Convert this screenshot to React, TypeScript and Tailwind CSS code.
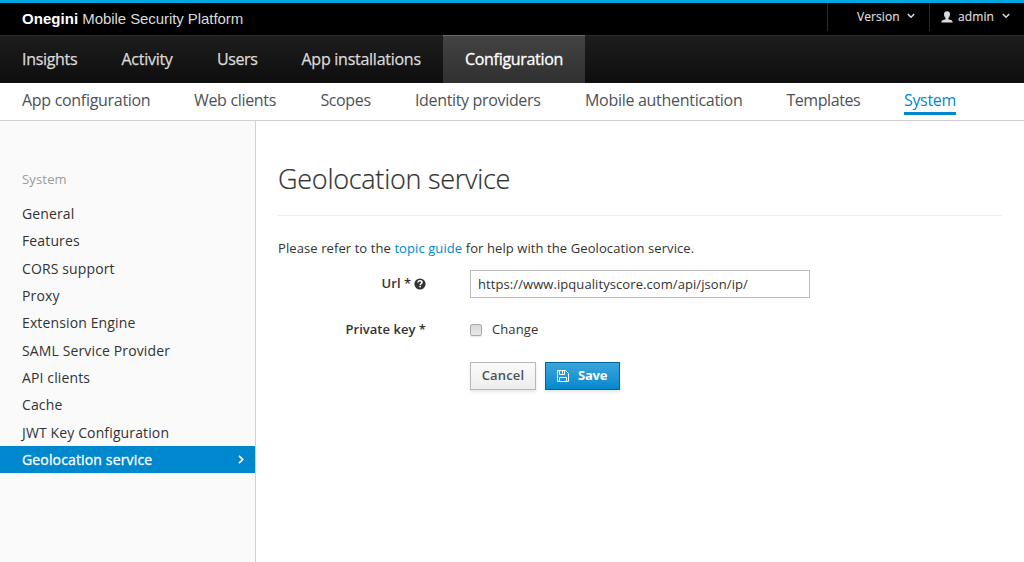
import React from "react";

const topNav = [
  { label: "Insights", active: false, size: "w-[99.5px] tracking-[-0.31px]" },
  { label: "Activity", active: false, size: "w-[95.5px] tracking-[-0.27px]" },
  { label: "Users", active: false, size: "w-[84.5px] tracking-[-0.4px]" },
  { label: "App installations", active: false, size: "w-[163.5px] tracking-[-0.26px]" },
  { label: "Configuration", active: true, size: "w-[142px] tracking-[-0.31px]" },
];

const subNav = [
  { label: "App configuration", size: "w-[172px] tracking-[-0.3px]" },
  { label: "Web clients", size: "w-[126.4px] tracking-[-0.33px]" },
  { label: "Scopes", size: "w-[94.6px] tracking-[-0.36px]" },
  { label: "Identity providers", size: "w-[170px] tracking-[-0.34px]" },
  { label: "Mobile authentication", size: "w-[201.4px] tracking-[-0.29px]" },
  { label: "Templates", size: "w-[117.6px] tracking-[-0.42px]" },
  { label: "System", size: "w-[52px] tracking-[-0.32px]" },
];

const sideNav = [
  "General",
  "Features",
  "CORS support",
  "Proxy",
  "Extension Engine",
  "SAML Service Provider",
  "API clients",
  "Cache",
  "JWT Key Configuration",
];

function Chevron({ className }: { className: string }) {
  return (
    <svg viewBox="0 0 8 6" className={className} fill="none" stroke="currentColor" strokeWidth="1.6">
      <path d="M0.8 1 L4 4.2 L7.2 1" />
    </svg>
  );
}

function UserIcon() {
  return (
    <svg viewBox="0 0 12 12" className="h-3 w-3" fill="currentColor">
      <path d="M6 0.3C4 0.3 3 1.5 3 3.3C3 5 3.8 6.2 4.5 6.9V8.3L0.9 9.6L0.3 11.6H11.7L11.1 9.6L7.5 8.3V6.9C8.2 6.2 9 5 9 3.3C9 1.5 8 0.3 6 0.3Z" />
    </svg>
  );
}

function HelpIcon() {
  return (
    <svg viewBox="0 0 12 12" className="h-3 w-3">
      <circle cx="6" cy="6" r="5.6" fill="#333333" />
      <path d="M3.9 4.5C4 3.3 4.9 2.8 6 2.8C7.3 2.8 8 3.5 8 4.4C8 5.6 6.2 5.6 6.1 7" fill="none" stroke="white" strokeWidth="1.5" />
      <rect x="5.3" y="7.8" width="1.6" height="1.5" fill="white" />
    </svg>
  );
}

function SaveIcon() {
  return (
    <svg viewBox="0 0 12 12" className="h-3 w-3" fill="none" stroke="white">
      <path d="M0.5 0.5H8.5L11.5 3.5V11.5H0.5Z" />
      <path d="M2.5 0.5V4.5H7.5V0.5" />
      <path d="M2.5 11.5V7.5H9.5V11.5" />
      <path d="M5.5 1V3.5" />
    </svg>
  );
}

export default function App() {
  return (
    <div className="flex h-[562px] w-[1024px] flex-col overflow-hidden bg-white font-['Open_Sans',sans-serif] text-[13px] text-[#333333]">
      <header className="flex h-[35px] justify-between border-t-[3px] border-[#00a8e1] bg-black text-[#dbdada]">
        <div className="flex h-8 items-center pl-[22px] font-['Liberation_Sans',sans-serif] text-[15px] tracking-[-0.07px] whitespace-pre">
          <span className="font-bold tracking-[0.05px] text-white">Onegini</span>
          <span> Mobile Security Platform</span>
        </div>
        <div className="flex h-7 text-[12px] leading-[25px] [-webkit-text-stroke:0.2px_#dbdada]">
          <div className="flex w-[102px] border-l border-[#2b2b2b] pt-px pl-[29px]">
            <span className="w-[43px] tracking-[0.08px]">Version</span>
            <Chevron className="mt-[9px] ml-[7px] h-1.5 w-2" />
          </div>
          <div className="flex w-[95px] border-l border-[#2b2b2b] pt-px pl-[11px]">
            <div className="mt-[7px]">
              <UserIcon />
            </div>
            <span className="ml-[5px] w-[36px] tracking-[0.1px]">admin</span>
            <Chevron className="mt-[9px] ml-2 h-1.5 w-2" />
          </div>
        </div>
      </header>

      <nav className="flex h-12 border-t border-[#2d2d2d] bg-linear-to-b from-[#1d1d1d] to-[#0e0e0e] text-[16px] leading-[47px] whitespace-nowrap text-[#dbdada]">
        {topNav.map((item) => (
          <a
            key={item.label}
            className={
              (item.active
                ? "-mt-px border-t border-[#696969] bg-linear-to-b from-[#434343] to-[#303030] pl-[22px] text-white [-webkit-text-stroke:0.3px_white] "
                : "pl-[22px] [-webkit-text-stroke:0.25px_#dbdada] ") + item.size
            }
          >
            {item.label}
          </a>
        ))}
      </nav>

      <nav className="flex h-[38px] border-b border-[#d1d1d1] pl-[22px] text-[16px] leading-[35px] whitespace-nowrap text-[#4d5258]">
        {subNav.map((item) => (
          <a
            key={item.label}
            className={
              (item.label === "System" ? "h-8 border-b-[3px] border-[#0088ce] text-[#0088ce] " : "") + item.size
            }
          >
            {item.label}
          </a>
        ))}
      </nav>

      <div className="flex flex-1">
        <aside className="w-64 border-r border-[#d1d1d1] bg-[#fafafa] pt-12 text-[14px] tracking-[0.13px]">
          <h2 className="mb-[11px] pl-[22px] text-[13px] leading-5 tracking-[0.17px] text-[#9c9c9c]">System</h2>
          <div className="flex flex-col">
            {sideNav.map((label) => (
              <a key={label} className="h-[27.35px] pl-[22px] leading-[27px]">
                {label}
              </a>
            ))}
            <a className="flex h-[27px] items-center justify-between bg-[#0088ce] pr-[11px] pl-[22px] leading-[27px] tracking-[0.15px] text-white [-webkit-text-stroke:0.3px_white]">
              Geolocation service
              <svg viewBox="0 0 6 9" className="h-[9px] w-1.5" fill="none" stroke="white" strokeWidth="1.7">
                <path d="M1 0.8L4.7 4.5L1 8.2" />
              </svg>
            </a>
          </div>
        </aside>

        <main className="flex-1 pr-[22px] pl-[22px]">
          <h1 className="h-[95px] border-b border-[#eeeeee] pt-[38px] text-[27px] leading-10 font-light tracking-[-0.27px] [-webkit-text-stroke:0.2px_#333333]">
            Geolocation service
          </h1>
          <p className="mt-[22px] leading-5 tracking-[0.09px]">
            Please refer to the <a className="text-[#0088ce]">topic guide</a> for help with the Geolocation service.
          </p>
          <form className="mt-3">
            <div className="flex h-7">
              <label className="flex w-[148px] items-center justify-end gap-[3px] pb-px font-semibold">
                Url * <HelpIcon />
              </label>
              <input
                className="ml-11 h-7 w-[340px] border border-[#bbbbbb] bg-white px-[7px] text-[13px] tracking-[0.08px] text-[#333333] outline-none"
                defaultValue="https://www.ipqualityscore.com/api/json/ip/"
              />
            </div>
            <div className="mt-[22px] flex h-5 items-center">
              <span className="w-[148px] text-right font-semibold tracking-[0.03px]">Private key *</span>
              <span className="ml-11 h-3 w-3 rounded-[2px] border border-[#aaaaaa] bg-linear-to-b from-[#d9d9d9] to-[#e8e8e8] shadow-[0_1px_1px_rgba(0,0,0,0.1)]" />
              <span className="ml-[10px] tracking-[0.1px]">Change</span>
            </div>
            <div className="mt-[22px] ml-48 flex gap-[9px] text-[13px] leading-5 font-semibold">
              <button type="button" className="h-7 w-[66px] border border-[#b7b7b7] bg-linear-to-b from-[#fafafa] to-[#ededed] pb-0.5 tracking-[0.17px] text-[#4d5258] shadow-[0_2px_3px_rgba(3,3,3,0.1)]">
                Cancel
              </button>
              <button type="button" className="flex h-7 w-[75px] items-center border border-[#00659c] bg-linear-to-b from-[#39a5dc] to-[#0088ce] pl-[11px] text-white shadow-[0_2px_3px_rgba(3,3,3,0.1)]">
                <SaveIcon />
                <span className="ml-[9px] pb-0.5 font-bold tracking-[-0.25px]">Save</span>
              </button>
            </div>
          </form>
        </main>
      </div>
    </div>
  );
}
